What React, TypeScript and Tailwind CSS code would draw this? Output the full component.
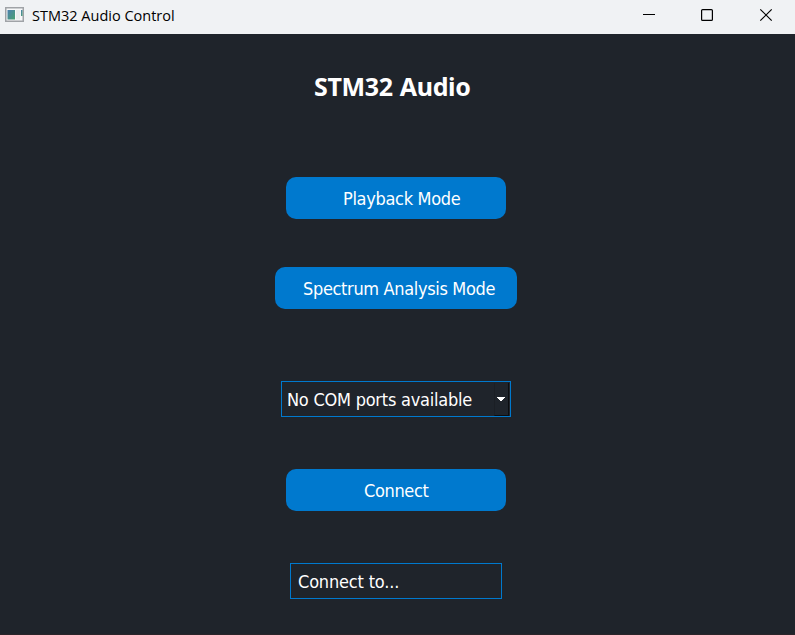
const ui = "font-['DejaVu_Sans_Condensed','DejaVu_Sans',sans-serif] [font-stretch:condensed]";

function TitleBar() {
  return (
    <header className="flex h-[34px] shrink-0 items-start bg-[#f0f2f4] text-black">
      <svg className="ml-[5px] mt-[7px]" width="19" height="16" viewBox="0 0 19 16">
        <defs>
          <linearGradient id="pane" x1="0" y1="0" x2="1" y2="1">
            <stop offset="0" stopColor="#4d80b0" />
            <stop offset="1" stopColor="#48a170" />
          </linearGradient>
        </defs>
        <rect x="0.75" y="0.75" width="17.5" height="13.5" fill="#f7f8f9" stroke="#a0a3a7" strokeWidth="1.5" />
        <rect x="2.5" y="3" width="7.5" height="9.5" fill="url(#pane)" />
        <rect x="11" y="3" width="4" height="9.5" fill="#e9eced" />
        <rect x="16" y="3" width="1.5" height="6" fill="url(#pane)" />
      </svg>
      <span className="ml-2 mt-[6px] whitespace-nowrap font-['Open_Sans',sans-serif] text-[14.5px] leading-[20px] [font-stretch:normal]">
        STM32 Audio Control
      </span>
      <svg className="ml-auto mr-[22px] mt-[8px]" width="130" height="15" viewBox="0 0 130 15" fill="none" stroke="#000">
        <path d="M0 6.5H12" />
        <rect x="58.6" y="1.6" width="10.8" height="10.8" rx="1" strokeWidth="1.2" />
        <path d="M117.3 1.3L128.7 12.7M128.7 1.3L117.3 12.7" strokeWidth="1.2" />
      </svg>
    </header>
  );
}

export default function App() {
  return (
    <div className={`flex h-[635px] w-[795px] flex-col overflow-hidden bg-[#1f242b] text-white ${ui}`}>
      <TitleBar />
      <main className="flex flex-1 flex-col items-start whitespace-nowrap border-b border-[#2b2429] text-[18px] leading-[24px]">
        <h1 className="ml-[314px] mt-[36px] font-['Noto_Sans',sans-serif] text-[25px] font-bold leading-[32px] tracking-[-0.35px] [font-stretch:normal] [word-spacing:1px]">
          STM32 Audio
        </h1>
        <button className="ml-[286px] mt-[75px] flex h-[42px] w-[220px] items-center rounded-[10px] bg-[#0079ce] pl-[57px] pt-[2px]">
          <span className="tracking-[-0.32px]">Playback Mode</span>
        </button>
        <button className="ml-[275px] mt-[48px] flex h-[42px] w-[242px] items-center rounded-[10px] bg-[#0079ce] pl-[28px] pt-[2px]">
          <span className="tracking-[-0.34px]">Spectrum Analysis Mode</span>
        </button>
        <div className="ml-[281px] mt-[72px] flex h-[36px] w-[230px] items-center border border-[#0079ce] pl-[5px]">
          <span className="pt-[2px] tracking-[-0.24px]">No COM ports available</span>
          <div className="ml-auto mr-px flex h-[33px] w-[15px] items-center justify-center border-b border-l border-r border-b-[#0b0d10] border-l-[#1b1f25] border-r-[#0b0d10] pr-px">
            <svg className="shrink-0" width="8" height="4" viewBox="0 0 8 4" fill="#fff" shapeRendering="crispEdges">
              <path d="M0 0H8V1H7V2H6V3H5V4H3V3H2V2H1V1H0Z" />
            </svg>
          </div>
        </div>
        <button className="ml-[286px] mt-[52px] flex h-[42px] w-[220px] items-center rounded-[10px] bg-[#0079ce] pl-[78px] pt-[2px]">
          <span className="tracking-[-0.36px]">Connect</span>
        </button>
        <div className="ml-[290px] mt-[52px] flex h-[36px] w-[212px] items-center border border-[#0079ce] pl-[7px] pt-[2px]">
          <span className="tracking-[-0.18px]">Connect to...</span>
        </div>
      </main>
    </div>
  );
}
